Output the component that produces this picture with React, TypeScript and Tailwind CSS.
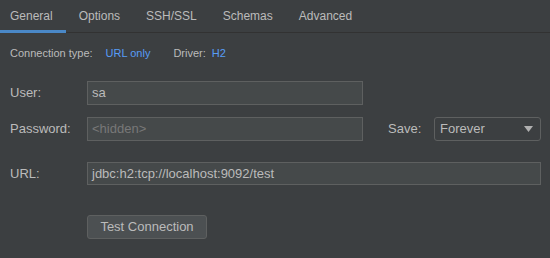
import React from 'react';

const font = { fontFamily: '"Liberation Sans", Arial, sans-serif' };

const tabs = ['General', 'Options', 'SSH/SSL', 'Schemas', 'Advanced'];

const Field: React.FC<{ value?: string; placeholder?: string; className?: string }> = ({ value, placeholder, className }) => (
  <div className={`bg-[#45494a] border border-[#5e6060] flex items-center px-[4px] text-[13px] ${className ?? ''}`}>
    {value ? <span className="text-[#bbbbbb]">{value}</span> : <span className="text-[#787878]">{placeholder}</span>}
  </div>
);

export default function App() {
  return (
    <div className="w-[550px] h-[258px] bg-[#3c3f41] text-[#bbbbbb] overflow-hidden" style={font}>
      {/* Tabs */}
      <div className="flex h-[33px] border-b border-[#323232]">
        {tabs.map((t, i) => (
          <div
            key={t}
            className={`relative flex items-center text-[12px] ${i === 0 ? 'pl-[10px] pr-[13px]' : 'px-[13px]'}`}
          >
            {t}
            {i === 0 && <div className="absolute left-0 right-0 bottom-[-1px] h-[3px] bg-[#4a88c7]" />}
          </div>
        ))}
      </div>

      {/* Connection info */}
      <div className="flex items-center h-[40px] pl-[10px] text-[11px]">
        <span>Connection type:</span>
        <span className="ml-[13px] text-[#589df6]">URL only</span>
        <span className="ml-[23px]">Driver:</span>
        <span className="ml-[6px] text-[#589df6]">H2</span>
      </div>

      {/* Form */}
      <div className="pl-[10px] text-[13px]">
        <div className="flex items-center mt-[8px]">
          <span className="w-[77px]">User:</span>
          <Field value="sa" className="w-[276px] h-[24px]" />
        </div>
        <div className="flex items-center mt-[12px]">
          <span className="w-[77px]">Password:</span>
          <Field placeholder="<hidden>" className="w-[276px] h-[24px]" />
          <span className="ml-[25px] w-[46px]">Save:</span>
          <div className="h-[24px] w-[107px] border border-[#5e6060] rounded-[3px] bg-[#3c3f41] flex items-center justify-between pl-[5px] pr-[7px]">
            <span className="text-[#bbbbbb]">Forever</span>
            <svg width="9" height="6" viewBox="0 0 9 6">
              <path d="M0 0 L9 0 L4.5 6 Z" fill="#b0b0b0" />
            </svg>
          </div>
        </div>
        <div className="flex items-center mt-[21px]">
          <span className="w-[77px]">URL:</span>
          <Field value="jdbc:h2:tcp://localhost:9092/test" className="w-[454px] h-[23px]" />
        </div>
        <div className="flex mt-[30px] pl-[77px]">
          <div className="h-[24px] w-[120px] rounded-[3px] border border-[#5e6060] bg-[#4c5052] flex items-center justify-center text-[#bbbbbb]">
            Test Connection
          </div>
        </div>
      </div>
    </div>
  );
}
